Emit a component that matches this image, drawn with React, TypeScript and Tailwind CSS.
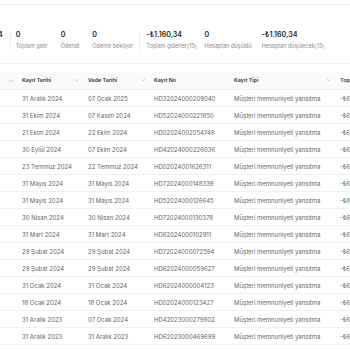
import React from "react";

type Row = [string, string, string, string, string];

const rows: Row[] = [
  ["31 Aralık 2024", "07 Ocak 2025", "HD32024000209040", "Müşteri memnuniyeti yansıtma", "-₺61,20"],
  ["31 Ekim 2024", "07 Kasım 2024", "HD52024000221850", "Müşteri memnuniyeti yansıtma", "-₺63,10"],
  ["21 Ekim 2024", "22 Ekim 2024", "HD02024002054748", "Müşteri memnuniyeti yansıtma", "-₺65,40"],
  ["30 Eylül 2024", "07 Ekim 2024", "HD42024000226036", "Müşteri memnuniyeti yansıtma", "-₺62,80"],
  ["23 Temmuz 2024", "22 Temmuz 2024", "HD02024001626311", "Müşteri memnuniyeti yansıtma", "-₺61,90"],
  ["31 Mayıs 2024", "31 Mayıs 2024", "HD72024000148339", "Müşteri memnuniyeti yansıtma", "-₺65,30"],
  ["31 Mayıs 2024", "31 Mayıs 2024", "HD52024000126645", "Müşteri memnuniyeti yansıtma", "-₺85,60"],
  ["30 Nisan 2024", "30 Nisan 2024", "HD72024000130378", "Müşteri memnuniyeti yansıtma", "-₺61,70"],
  ["31 Mart 2024", "31 Mart 2024", "HD62024000102911", "Müşteri memnuniyeti yansıtma", "-₺62,40"],
  ["29 Şubat 2024", "29 Şubat 2024", "HD72024000072594", "Müşteri memnuniyeti yansıtma", "-₺69,10"],
  ["29 Şubat 2024", "29 Şubat 2024", "HD62024000059627", "Müşteri memnuniyeti yansıtma", "-₺62,50"],
  ["31 Ocak 2024", "31 Ocak 2024", "HD62024000004123", "Müşteri memnuniyeti yansıtma", "-₺61,30"],
  ["18 Ocak 2024", "18 Ocak 2024", "HD02024000123427", "Müşteri memnuniyeti yansıtma", "-₺62,20"],
  ["31 Aralık 2023", "07 Ocak 2024", "HD42023000279802", "Müşteri memnuniyeti yansıtma", "-₺64,60"],
  ["31 Aralık 2023", "31 Aralık 2023", "HD62023000469699", "Müşteri memnuniyeti yansıtma", "-₺64,90"],
];

function Chevron() {
  return (
    <svg width="6" height="4" viewBox="0 0 6 4" className="shrink-0">
      <path d="M0.8 0.8 L3 3 L5.2 0.8" fill="none" stroke="#c4c4c4" strokeWidth="0.7" />
    </svg>
  );
}

function Stat({ value, label }: { value: string; label: string }) {
  return (
    <div className="flex flex-col shrink-0">
      <div className="text-[7.1px] leading-[8px] font-semibold text-[#262626] whitespace-nowrap">{value}</div>
      <div className="mt-[3px] text-[5.5px] leading-[8px] text-[#8c8c8c] whitespace-nowrap">{label}</div>
    </div>
  );
}

function Divider() {
  return <div className="w-px h-[18px] bg-[#ececec] shrink-0" />;
}

export default function App() {
  return (
    <div className="w-[350px] h-[350px] overflow-hidden bg-white font-['Inter',sans-serif]">
      <div className="h-[4px]" />
      <div className="border-t border-[#f0f0f0]" />
      <div className="pt-[26px] flex items-center ml-[-33px] whitespace-nowrap">
        <div className="flex items-center pr-[7px]">
          <Stat value="-₺1.160,34" label="Toplam tutar" />
        </div>
        <Divider />
        <div className="flex items-center gap-[13px] pl-[5px] pr-[6px]">
          <Stat value="0" label="Toplam gelir" />
          <Stat value="0" label="Ödendi" />
          <Stat value="0" label="Ödeme bekliyor" />
        </div>
        <Divider />
        <div className="flex items-center pl-[6px]">
          <Stat value="-₺1.160,34" label="Toplam giderler(15)" />
          <div className="w-[8px] shrink-0" />
          <Stat value="0" label="Hesaptan düşüldü" />
          <div className="w-[10px] shrink-0" />
          <Stat value="-₺1.160,34" label="Hesaptan düşülecek(15)" />
        </div>
      </div>
      <div className="mt-[13px] border-t border-[#f0f0f0]" />
      <div className="mt-[8px] ml-[-24px]">
        <div className="flex h-[18px] bg-[#fafafa] border-b border-[#f0f0f0] items-center text-[5.4px] font-semibold text-[#333] whitespace-nowrap">
          <div className="w-[40px] shrink-0 flex justify-end pr-[2px]"><Chevron /></div>
          <div className="w-[66px] shrink-0 flex items-center justify-between pl-[6px] pr-[2px]"><span>Kayıt Tarihi</span><Chevron /></div>
          <div className="w-[66px] shrink-0 flex items-center justify-between pl-[6px] pr-[2px]"><span>Vade Tarihi</span><Chevron /></div>
          <div className="w-[80px] shrink-0 flex items-center pl-[6px]"><span>Kayıt No</span></div>
          <div className="w-[106px] shrink-0 flex items-center justify-between pl-[6px] pr-[2px]"><span>Kayıt Tipi</span><Chevron /></div>
          <div className="w-[120px] shrink-0 flex items-center pl-[6px]"><span>Toplam tutar</span></div>
        </div>
        {rows.map((r, i) => (
          <div key={i} className="flex h-[17px] border-b border-[#f0f0f0] items-center text-[6px] text-[#666] whitespace-nowrap">
            <div className="w-[40px] shrink-0" />
            <div className="w-[66px] shrink-0 pl-[6px]">{r[0]}</div>
            <div className="w-[66px] shrink-0 pl-[6px]">{r[1]}</div>
            <div className="w-[80px] shrink-0 pl-[6px]">{r[2]}</div>
            <div className="w-[106px] shrink-0 pl-[6px]">{r[3]}</div>
            <div className="w-[120px] shrink-0 pl-[6px]">{r[4]}</div>
          </div>
        ))}
      </div>
    </div>
  );
}
